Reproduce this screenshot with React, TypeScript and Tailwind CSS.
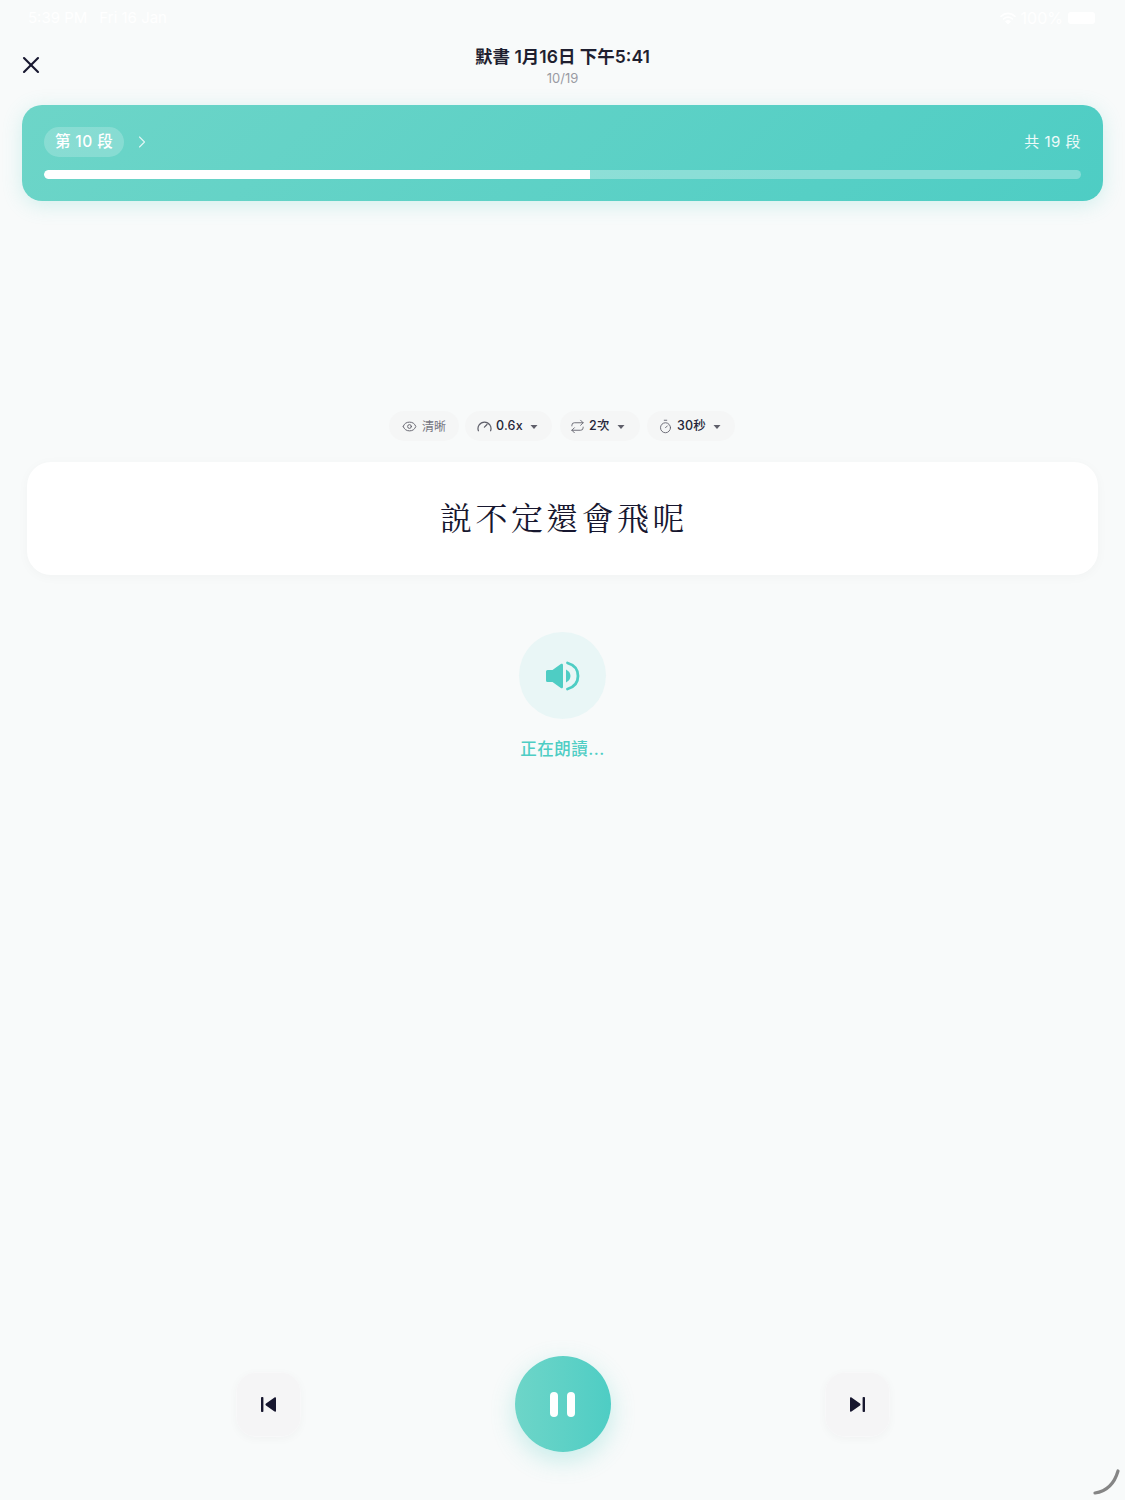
import React from 'react'
import { ChevronRight, Eye, Repeat, Timer, X } from 'lucide-react'

const SANS = "font-['Inter','Noto_Sans_CJK_TC',sans-serif]"
const CHIP = 'flex h-[30px] items-center gap-[4px] rounded-full bg-[#f5f6f6]'

function Caret() {
  return (
    <svg width="8" height="4" viewBox="0 0 8 4" className="ml-[3px] mt-px">
      <path d="M0.5 0h7L4 4z" fill="#5f5f6a" />
    </svg>
  )
}

function Gauge() {
  return (
    <svg width="15" height="15" viewBox="0 0 15 15" fill="none" stroke="#5f5f6a" strokeWidth="1.200" strokeLinecap="round">
      <path d="M1.400 11.800A6.500 6.500 0 1 1 13.600 11.800" />
      <path d="M7.400 8.200l2.600-2.700" />
    </svg>
  )
}

function SpeakerIcon() {
  return (
    <svg width="34" height="30" viewBox="0 0 34 30" fill="#4ecdc4">
      <path d="M0 10.500A1.500 1.500 0 0 1 1.500 9H6.500L14.800 3c1-.7 2.200-.1 2.200 1v22c0 1.100-1.200 1.700-2.200 1L6.500 21H1.500A1.500 1.500 0 0 1 0 19.500z" />
      <path d="M20 8.500c2.500 1.300 4.500 3.500 4.500 6.500s-2 5.200-4.500 6.500z" />
      <path d="M21.500 2C28.500 4 32 9 32 15S28.500 26 21.500 28" fill="none" stroke="#4ecdc4" strokeWidth="2.800" strokeLinecap="round" />
    </svg>
  )
}

function SkipIcon({ flip }: { flip?: boolean }) {
  return (
    <svg width="15" height="15" viewBox="0 0 15 15" fill="#17172f" className={flip ? 'rotate-180' : ''}>
      <rect x="0" y="0" width="2.400" height="15" rx="0.800" />
      <path d="M15 1.200v12.600c0 .8-.8 1.200-1.500.8L5 8.500c-.7-.5-.7-1.500 0-2l8.500-6.100c.7-.4 1.500 0 1.500.8z" />
    </svg>
  )
}

function SkipButton({ flip }: { flip?: boolean }) {
  return (
    <button className="flex h-[65px] w-[65px] items-center justify-center rounded-[20px] border border-[#f8f8f9] bg-[#f5f5f6] shadow-[0_2px_10px_rgba(0,0,0,0.03)]">
      <SkipIcon flip={flip} />
    </button>
  )
}

export default function App() {
  return (
    <div className={`relative flex min-h-[1500px] flex-col overflow-hidden bg-[#f8fafa] ${SANS}`}>
      {/* status bar */}
      <div className="flex h-[36px] items-center justify-between pl-[28px] pr-[30px] text-[15px] text-white">
        <div className="flex gap-[12px]">
          <span>5:39 PM</span>
          <span>Fri 16 Jan</span>
        </div>
        <div className="flex items-center gap-[5px] text-[16px]">
          <svg width="16" height="12" viewBox="0 0 16 12" fill="none" stroke="white" strokeWidth="1.600" strokeLinecap="round">
            <path d="M1 4.300C5.200 0.400 10.800 0.400 15 4.300" />
            <path d="M3.500 7C6.200 4.600 9.800 4.600 12.500 7" />
            <path d="M6.200 9.600C7.200 8.800 8.800 8.800 9.800 9.600L8 11.300z" fill="white" />
          </svg>
          <span>100%</span>
          <div className="h-[12px] w-[27px] rounded-[3px] bg-white" />
        </div>
      </div>

      {/* header */}
      <div className="relative flex h-[69px] flex-col items-center pt-[9px]">
        <X className="absolute left-[17px] top-[15px] h-[28px] w-[28px] text-[#17172f]" strokeWidth={1.800} />
        <div className="text-[17.500px] font-semibold leading-[24px] text-[#1f1f30]">默書 1月16日 下午5:41</div>
        <div className="text-[13px] leading-[18px] text-[#9a9aa3]">10/19</div>
      </div>

      {/* progress card */}
      <div className="mx-[22px] h-[96px] rounded-[20px] bg-[linear-gradient(135deg,#6dd5c8,#4ecdc4)] px-[22px] pt-[22px] shadow-[0_4px_20px_rgba(78,205,196,0.22)]">
        <div className="flex items-center justify-between">
          <div className="flex items-center">
            <div className="flex h-[30px] w-[80px] items-center justify-center rounded-full bg-white/20 text-[15.500px] font-medium tracking-[0.4px] text-white">
              第 10 段
            </div>
            <ChevronRight className="ml-[8px] h-[20px] w-[20px] text-white/80" strokeWidth={1.300} />
          </div>
          <div className="text-[15px] tracking-[0.5px] text-white/90">共 19 段</div>
        </div>
        <div className="mt-[13px] h-[9px] overflow-hidden rounded-full bg-white/30">
          <div className="h-full w-[52.630%] rounded-l-full bg-white" />
        </div>
      </div>

      {/* settings chips */}
      <div className="mt-[210px] flex h-[30px] items-center pl-[389px] text-[12.500px] font-medium tracking-[0.2px] text-[#26263a]">
        <div className={`${CHIP} w-[70px] pl-[13px] text-[12px] font-normal tracking-normal text-[#75757f]`}>
          <Eye className="mr-[1px] h-[15px] w-[15px] text-[#5f5f6a]" strokeWidth={1.500} />
          <span className="mt-[2px]">清晰</span>
        </div>
        <div className={`${CHIP} ml-[6px] w-[87px] pl-[12px]`}>
          <Gauge />
          0.6x
          <Caret />
        </div>
        <div className={`${CHIP} ml-[8px] w-[80px] pl-[10px]`}>
          <Repeat className="h-[15px] w-[15px] text-[#5f5f6a]" strokeWidth={1.400} />
          2次
          <Caret />
        </div>
        <div className={`${CHIP} ml-[7px] w-[88px] pl-[11px]`}>
          <Timer className="h-[15px] w-[15px] text-[#5f5f6a]" strokeWidth={1.400} />
          30秒
          <Caret />
        </div>
      </div>

      {/* sentence */}
      <div className="mx-[27px] mt-[21px] flex h-[113px] items-center justify-center rounded-[24px] bg-white pb-[6px] pl-[3px] font-['Noto_Serif_CJK_TC','Noto_Sans_CJK_TC',serif] text-[32px] tracking-[3.400px] text-[#17172f] shadow-[0_2px_12px_rgba(0,0,0,0.03)]">
        説不定還會飛呢
      </div>

      {/* speaking state */}
      <div className="mt-[57px] flex flex-col items-center">
        <div className="flex h-[87px] w-[87px] items-center justify-center rounded-full bg-[#e9f6f6]">
          <SpeakerIcon />
        </div>
        <div className="mt-[18px] text-[16.500px] font-medium leading-[24px] tracking-[0.5px] text-[#4ecdc4]">正在朗讀...</div>
      </div>

      {/* playback controls */}
      <div className="mt-auto flex items-center justify-center gap-[214px] pb-[48px]">
        <SkipButton />
        <button className="flex h-[96px] w-[96px] items-center justify-center gap-[9px] rounded-full bg-gradient-to-r from-[#6dd5c8] to-[#4ecdc4] shadow-[0_8px_24px_rgba(78,205,196,0.3)]">
          <span className="h-[25px] w-[8px] rounded-full bg-white" />
          <span className="h-[25px] w-[8px] rounded-full bg-white" />
        </button>
        <SkipButton flip />
      </div>

      {/* corner gesture hint */}
      <svg width="30" height="28" viewBox="0 0 30 28" fill="none" className="absolute bottom-[4px] right-[3px]">
        <path d="M3 25C13 23.500 22 17 26 3" stroke="#858585" strokeWidth="3.200" strokeLinecap="round" />
      </svg>
    </div>
  )
}
